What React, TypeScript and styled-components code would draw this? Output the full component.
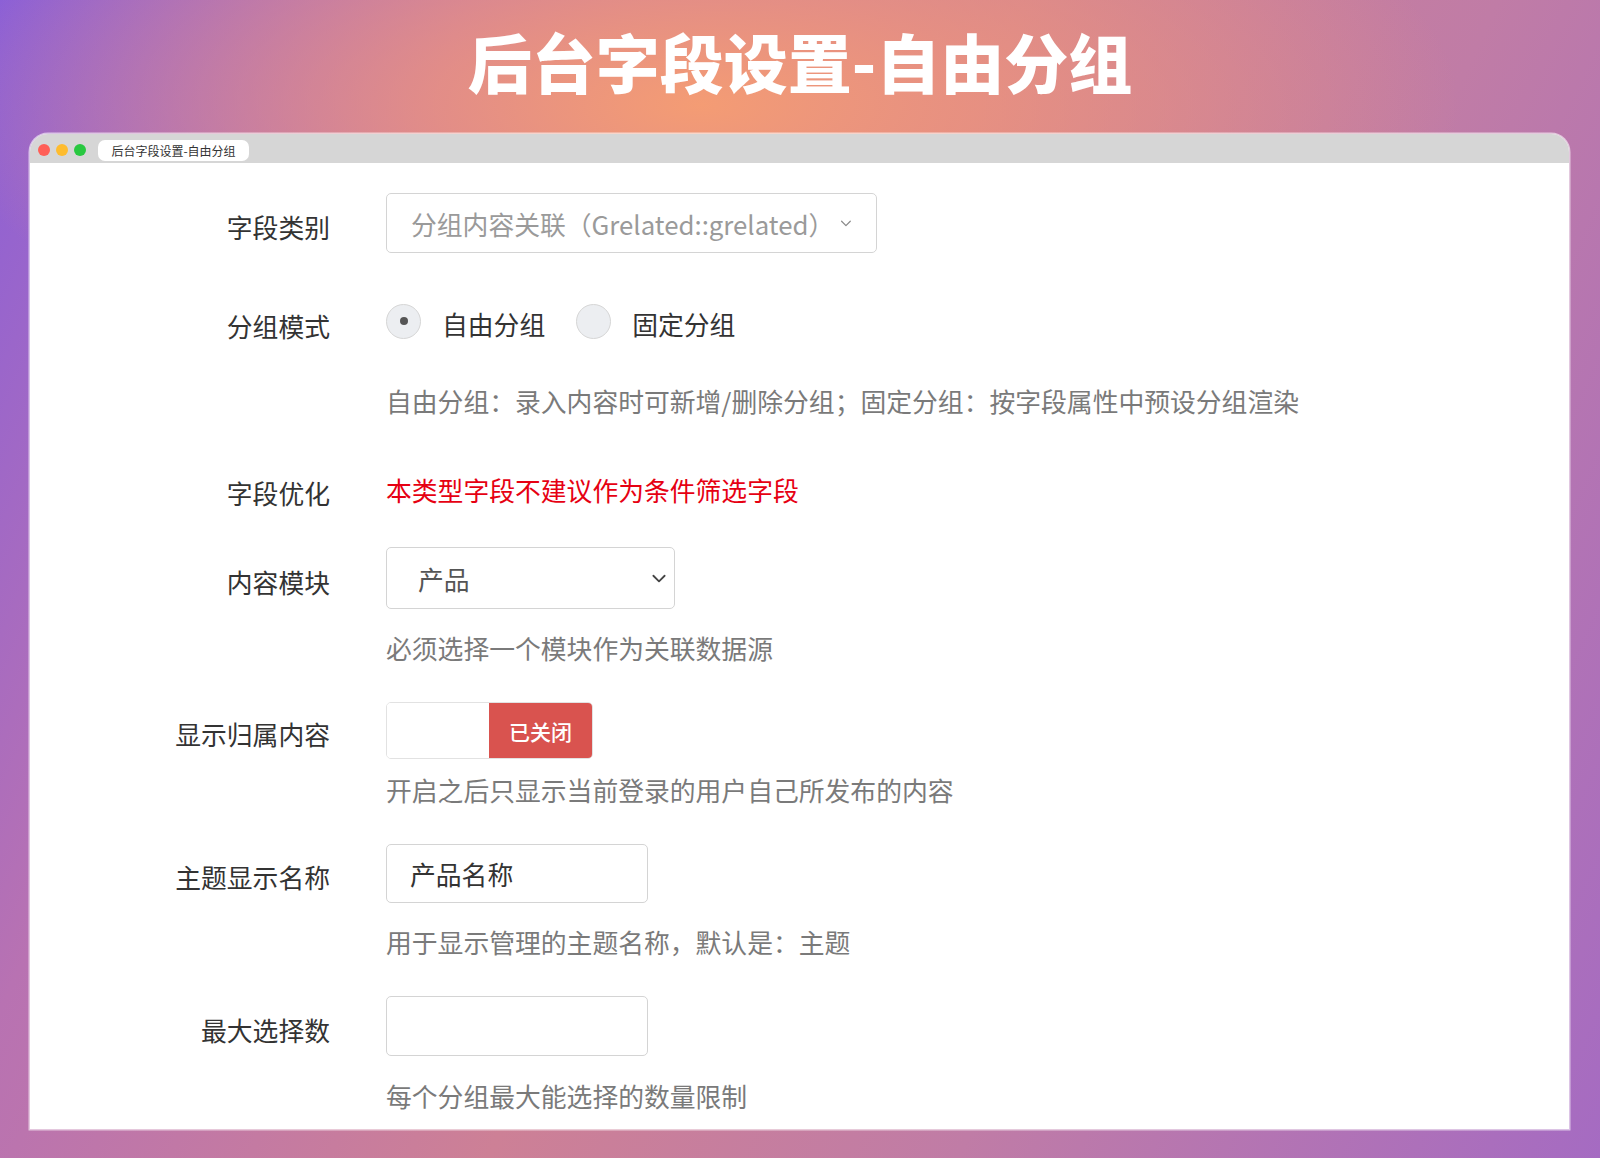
import { FC } from "react";
import styled, { createGlobalStyle } from "styled-components";

const GlobalStyle = createGlobalStyle`
  html, body {
    margin: 0;
    padding: 0;
  }
  body {
    font-family: "Noto Sans CJK SC", "Noto Sans", sans-serif;
    color: #333;
  }
`;

const TEXT = "25.8px";

const Chevron: FC<{ size: number; color: string; stroke: number }> = ({ size, color, stroke }) => (
  <svg width={size} height={size} viewBox="0 0 16 16" fill="none">
    <path d="M3 6l5 5 5-5" stroke={color} strokeWidth={stroke} strokeLinecap="round" strokeLinejoin="round" />
  </svg>
);

export default function App() {
  return (
    <Page>
      <GlobalStyle />
      <Header>
        <Title>后台字段设置-自由分组</Title>
      </Header>

      <Window>
        <TitleBar>
          <Dots>
            <Dot $color="#ff5f57" />
            <Dot $color="#febc2e" />
            <Dot $color="#28c840" />
          </Dots>
          <Tab>后台字段设置-自由分组</Tab>
        </TitleBar>

        <Form>
          <Row $mt={0}>
            <Label $h={60}>字段类别</Label>
            <Control>
              <Select $w={491} $h={60} $pl={24} $pr={7} $muted>
                <span>分组内容关联（Grelated::grelated）</span>
                <Chevron size={14} color="#8a8a8a" stroke={1.4} />
              </Select>
            </Control>
          </Row>

          <Row $mt={39}>
            <Label $h={60}>分组模式</Label>
            <Control>
              <Radios>
                <RadioItem>
                  <Radio $checked />
                  <span>自由分组</span>
                </RadioItem>
                <RadioItem>
                  <Radio />
                  <span>固定分组</span>
                </RadioItem>
              </Radios>
              <Help $mt={31}>自由分组：录入内容时可新增/删除分组；固定分组：按字段属性中预设分组渲染</Help>
            </Control>
          </Row>

          <Row $mt={40}>
            <Label $h={60}>字段优化</Label>
            <Control>
              <Warning>本类型字段不建议作为条件筛选字段</Warning>
            </Control>
          </Row>

          <Row $mt={28}>
            <Label $h={62}>内容模块</Label>
            <Control>
              <Select $w={289} $h={62} $pl={31} $pr={6}>
                <span>产品</span>
                <Chevron size={18} color="#444" stroke={1.6} />
              </Select>
              <Help $mt={21}>必须选择一个模块作为关联数据源</Help>
            </Control>
          </Row>

          <Row $mt={36}>
            <Label $h={57}>显示归属内容</Label>
            <Control>
              <Switch>
                <SwitchOff />
                <SwitchState>已关闭</SwitchState>
              </Switch>
              <Help $mt={13}>开启之后只显示当前登录的用户自己所发布的内容</Help>
            </Control>
          </Row>

          <Row $mt={36}>
            <Label $h={59}>主题显示名称</Label>
            <Control>
              <TextInput $h={59}>产品名称</TextInput>
              <Help $mt={21}>用于显示管理的主题名称，默认是：主题</Help>
            </Control>
          </Row>

          <Row $mt={36}>
            <Label $h={60}>最大选择数</Label>
            <Control>
              <TextInput $h={60} />
              <Help $mt={22}>每个分组最大能选择的数量限制</Help>
            </Control>
          </Row>
        </Form>
      </Window>
    </Page>
  );
}

const Page = styled.div`
  width: 1600px;
  height: 1158px;
  overflow: hidden;
  background:
    radial-gradient(ellipse 760px 300px at 700px 105px, rgba(244, 156, 116, 1) 0%, rgba(240, 150, 122, 0.75) 35%, rgba(232, 140, 130, 0) 100%),
    linear-gradient(115deg, #8a5fd8 0%, #b872b2 22%, #cd8096 48%, #c07ca6 70%, #a56bc2 100%);
`;

const Header = styled.div`
  height: 134px;
  display: flex;
  justify-content: center;
  box-sizing: border-box;
  padding-top: 27px;
`;

const Title = styled.h1`
  margin: 0;
  font-family: "Noto Sans CJK SC", sans-serif;
  font-size: 64px;
  line-height: 66px;
  font-weight: 900;
  color: #fff;
`;

const Window = styled.div`
  margin: 0 31px 0 30px;
  background: #fff;
  border-radius: 18px 18px 0 0;
  overflow: hidden;
  box-shadow: 0 0 0 1.5px rgba(255, 255, 255, 0.6);
`;

const TitleBar = styled.div`
  height: 29px;
  background: #d6d6d6;
  display: flex;
  align-items: center;
  padding-left: 8px;
  gap: 12px;
`;

const Dots = styled.div`
  display: flex;
  gap: 6px;
  margin-top: 3px;
`;

const Dot = styled.span<{ $color: string }>`
  width: 12px;
  height: 12px;
  border-radius: 50%;
  background: ${(p) => p.$color};
`;

const Tab = styled.div`
  height: 21px;
  width: 151px;
  margin-top: 4px;
  background: #fff;
  border-radius: 7px;
  font-size: 12px;
  line-height: 21px;
  text-align: center;
  color: #333;
`;

const Form = styled.div`
  padding: 30px 0 15px;
`;

const Row = styled.div<{ $mt: number }>`
  display: grid;
  grid-template-columns: 300px 1fr;
  column-gap: 56px;
  margin-top: ${(p) => p.$mt}px;
`;

const Label = styled.div<{ $h: number }>`
  height: ${(p) => p.$h}px;
  display: flex;
  align-items: center;
  justify-content: flex-end;
  box-sizing: border-box;
  padding-top: 6px;
  font-size: ${TEXT};
  color: #333;
`;

const Control = styled.div`
  display: flex;
  flex-direction: column;
  align-items: flex-start;
`;

const Select = styled.div<{ $w: number; $h: number; $pl: number; $pr: number; $muted?: boolean }>`
  width: ${(p) => p.$w}px;
  height: ${(p) => p.$h}px;
  box-sizing: border-box;
  border: 1px solid #d4d4d4;
  border-radius: 5px;
  padding: 0 ${(p) => p.$pr}px 0 ${(p) => p.$pl}px;
  display: flex;
  align-items: center;
  justify-content: space-between;
  font-size: ${TEXT};
  color: ${(p) => (p.$muted ? "#9a9a9a" : "#555")};
  gap: 8px;

  svg {
    margin-right: ${(p) => (p.$muted ? 16 : 0)}px;
  }
`;

const Radios = styled.div`
  height: 60px;
  display: flex;
  align-items: center;
  gap: 31px;
`;

const RadioItem = styled.label`
  display: flex;
  align-items: center;
  gap: 21px;
  font-size: ${TEXT};
  color: #333;
  padding-top: 2px;
`;

const Radio = styled.span<{ $checked?: boolean }>`
  width: 35px;
  height: 35px;
  box-sizing: border-box;
  border-radius: 50%;
  border: 1px solid #d6d6d6;
  background: #eceef1;
  display: flex;
  align-items: center;
  justify-content: center;
  margin-top: -4px;

  &::after {
    content: "";
    width: 8px;
    height: 8px;
    border-radius: 50%;
    background: #555;
    display: ${(p) => (p.$checked ? "block" : "none")};
  }
`;

const Help = styled.div<{ $mt: number }>`
  margin-top: ${(p) => p.$mt}px;
  font-size: ${TEXT};
  line-height: 36px;
  color: #7a7a7a;
  white-space: nowrap;
`;

const Warning = styled.div`
  height: 60px;
  display: flex;
  align-items: center;
  font-size: ${TEXT};
  color: #e60012;
`;

const Switch = styled.div`
  width: 207px;
  height: 57px;
  box-sizing: border-box;
  border: 1px solid #e2e2e2;
  border-radius: 5px;
  overflow: hidden;
  display: flex;
`;

const SwitchOff = styled.div`
  flex: 1;
  background: #fff;
`;

const SwitchState = styled.div`
  width: 103px;
  background: #d9534f;
  color: #fff;
  font-size: 21px;
  font-weight: 500;
  display: flex;
  align-items: center;
  justify-content: center;
`;

const TextInput = styled.div<{ $h: number }>`
  width: 262px;
  height: ${(p) => p.$h}px;
  box-sizing: border-box;
  border: 1px solid #d4d4d4;
  border-radius: 5px;
  padding-left: 23px;
  display: flex;
  align-items: center;
  font-size: ${TEXT};
  color: #333;
`;
